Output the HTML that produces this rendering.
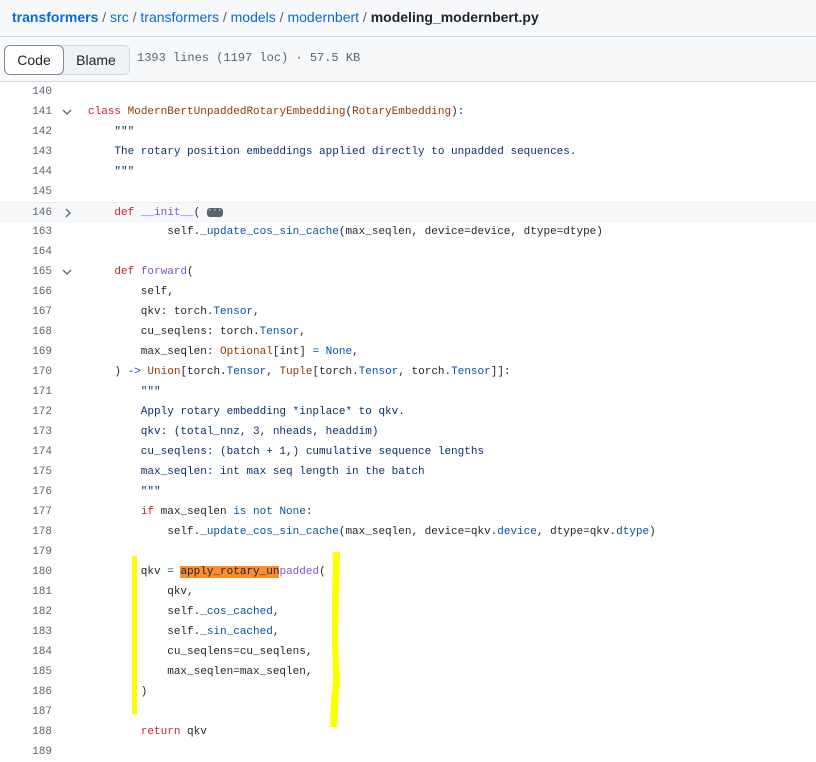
<!DOCTYPE html>
<html><head><style>
body{margin:0;width:816px;height:750px;overflow:hidden;background:#fff;font-family:"Liberation Sans",sans-serif;position:relative}
.bc{position:absolute;left:0;top:0;width:816px;height:36px;background:#f6f8fa;border-bottom:1px solid #d1d9e0;font-size:14px;line-height:34px;color:#59636e}
.bc span.l{color:#0969da}
.bar{position:absolute;left:0;top:37px;width:816px;height:44px;background:#f6f8fa;border-bottom:1px solid #d1d9e0}
.seg{position:absolute;left:4px;top:8px;width:124px;height:28px;border:1px solid #d1d9e0;border-radius:6px;background:#eff2f5}
.seg .c{position:absolute;left:-1px;top:-1px;width:58px;height:28px;border:1px solid #818b98;border-radius:6px;background:#fff;text-align:center;line-height:28px;font-size:14px;color:#1f2328}
.seg .b{position:absolute;left:58px;top:0;width:66px;text-align:center;line-height:28px;font-size:14px;color:#1f2328}
.meta{position:absolute;left:137px;top:14px;font:12px "Liberation Mono",monospace;color:#59636e}
.ln{position:absolute;left:0;width:816px;height:20px;font:11px/20px "Liberation Mono",monospace;color:#1f2328;white-space:pre}
.n{position:absolute;left:0;width:52px;text-align:right;color:#59636e}
.t{position:absolute;left:88px}
.k{color:#cf222e}.cl{color:#953800}.f{color:#8250df}.bl{color:#0550ae}.s{color:#0a3069}
.chev{position:absolute;left:63px;top:0;color:#59636e;font-size:11px}
</style></head><body>
<div class="bc"><span style="margin-left:12px" class="l"><b>transformers</b></span> / <span class="l">src</span> / <span class="l">transformers</span> / <span class="l">models</span> / <span class="l">modernbert</span> / <b style="color:#1f2328">modeling_modernbert.py</b></div>
<div class="bar"><div class="seg"><div class="c">Code</div><div class="b">Blame</div></div><div class="meta">1393 lines (1197 loc) · 57.5 KB</div></div>

<div class="ln" style="top:82px"><span class="n">140</span></div>
<div class="ln" style="top:102px"><span class="n">141</span><svg style="position:absolute;left:62px;top:7px" width="10" height="6"><path d="M1 1L5 5L9 1" stroke="#59636e" fill="none" stroke-width="1.3"/></svg><span class="t"><span class="k">class</span> <span class="cl">ModernBertUnpaddedRotaryEmbedding</span>(<span class="cl">RotaryEmbedding</span>):</span></div>
<div class="ln" style="top:122px"><span class="n">142</span><span class="t s">    """</span></div>
<div class="ln" style="top:142px"><span class="n">143</span><span class="t s">    The rotary position embeddings applied directly to unpadded sequences.</span></div>
<div class="ln" style="top:162px"><span class="n">144</span><span class="t s">    """</span></div>
<div class="ln" style="top:182px"><span class="n">145</span></div>
<div class="ln" style="top:202px;background:#f6f8fa;border-top:1px solid #eaeef2;height:20px"><span class="n">146</span><svg style="position:absolute;left:65px;top:5px" width="6" height="10"><path d="M1 1L5 5L1 9" stroke="#59636e" fill="none" stroke-width="1.3"/></svg><span class="t">    <span class="k">def</span> <span class="f">__init__</span>( <span style="display:inline-block;width:16px;height:9px;background:#59636e;border-radius:3px;vertical-align:middle;color:#fff;font-size:8px;line-height:6px;text-align:center">···</span></span></div>
<div class="ln" style="top:222px"><span class="n">163</span><span class="t">            self.<span class="bl">_update_cos_sin_cache</span>(max_seqlen, device=device, dtype=dtype)</span></div>
<div class="ln" style="top:242px"><span class="n">164</span></div>
<div class="ln" style="top:262px"><span class="n">165</span><svg style="position:absolute;left:62px;top:7px" width="10" height="6"><path d="M1 1L5 5L9 1" stroke="#59636e" fill="none" stroke-width="1.3"/></svg><span class="t">    <span class="k">def</span> <span class="f">forward</span>(</span></div>
<div class="ln" style="top:282px"><span class="n">166</span><span class="t">        self,</span></div>
<div class="ln" style="top:302px"><span class="n">167</span><span class="t">        qkv: torch.<span class="bl">Tensor</span>,</span></div>
<div class="ln" style="top:322px"><span class="n">168</span><span class="t">        cu_seqlens: torch.<span class="bl">Tensor</span>,</span></div>
<div class="ln" style="top:342px"><span class="n">169</span><span class="t">        max_seqlen: <span class="cl">Optional</span>[int] <span class="bl">=</span> <span class="bl">None</span>,</span></div>
<div class="ln" style="top:362px"><span class="n">170</span><span class="t">    ) <span class="bl">-&gt;</span> <span class="cl">Union</span>[torch.<span class="bl">Tensor</span>, <span class="cl">Tuple</span>[torch.<span class="bl">Tensor</span>, torch.<span class="bl">Tensor</span>]]:</span></div>
<div class="ln" style="top:382px"><span class="n">171</span><span class="t s">        """</span></div>
<div class="ln" style="top:402px"><span class="n">172</span><span class="t s">        Apply rotary embedding *inplace* to qkv.</span></div>
<div class="ln" style="top:422px"><span class="n">173</span><span class="t s">        qkv: (total_nnz, 3, nheads, headdim)</span></div>
<div class="ln" style="top:442px"><span class="n">174</span><span class="t s">        cu_seqlens: (batch + 1,) cumulative sequence lengths</span></div>
<div class="ln" style="top:462px"><span class="n">175</span><span class="t s">        max_seqlen: int max seq length in the batch</span></div>
<div class="ln" style="top:482px"><span class="n">176</span><span class="t s">        """</span></div>
<div class="ln" style="top:502px"><span class="n">177</span><span class="t">        <span class="k">if</span> max_seqlen <span class="bl">is not</span> <span class="bl">None</span>:</span></div>
<div class="ln" style="top:522px"><span class="n">178</span><span class="t">            self.<span class="bl">_update_cos_sin_cache</span>(max_seqlen, device=qkv.<span class="bl">device</span>, dtype=qkv.<span class="bl">dtype</span>)</span></div>
<div class="ln" style="top:542px"><span class="n">179</span></div>
<div class="ln" style="top:562px"><span class="n">180</span><span class="t">        qkv <span class="bl">=</span> <span style="background:#fd8c2c">apply_rotary_un</span><span class="f">padded</span>(</span></div>
<div class="ln" style="top:582px"><span class="n">181</span><span class="t">            qkv,</span></div>
<div class="ln" style="top:602px"><span class="n">182</span><span class="t">            self.<span class="bl">_cos_cached</span>,</span></div>
<div class="ln" style="top:622px"><span class="n">183</span><span class="t">            self.<span class="bl">_sin_cached</span>,</span></div>
<div class="ln" style="top:642px"><span class="n">184</span><span class="t">            cu_seqlens=cu_seqlens,</span></div>
<div class="ln" style="top:662px"><span class="n">185</span><span class="t">            max_seqlen=max_seqlen,</span></div>
<div class="ln" style="top:682px"><span class="n">186</span><span class="t">        )</span></div>
<div class="ln" style="top:702px"><span class="n">187</span></div>
<div class="ln" style="top:722px"><span class="n">188</span><span class="t">        <span class="k">return</span> qkv</span></div>
<div class="ln" style="top:742px"><span class="n">189</span></div>

<svg style="position:absolute;left:0;top:0" width="816" height="750">
<rect x="132" y="556" width="5" height="158" fill="#ffff00"/>
<path d="M333 552 L340 552 L339 600 L338 640 L340 680 L338 705 L337 727 L330 727 L331 700 L333 680 L332 640 L332 600 Z" fill="#ffff00"/>
</svg>
</body></html>
